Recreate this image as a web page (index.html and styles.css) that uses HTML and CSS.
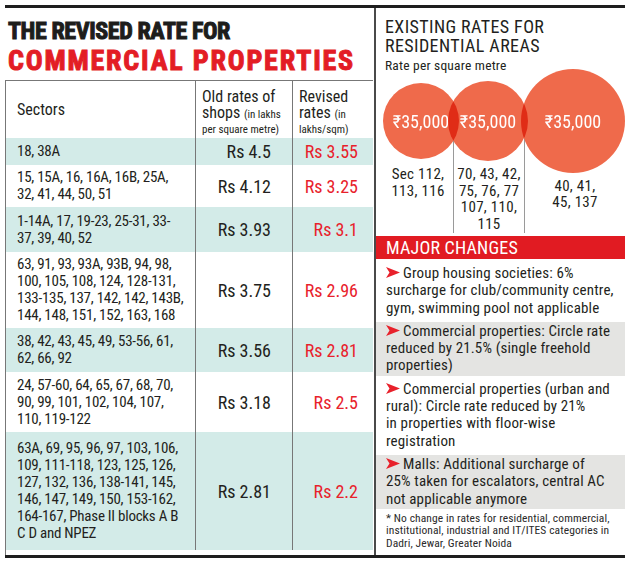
FILE: index.html
```html
<!DOCTYPE html>
<html>
<head>
<meta charset="utf-8">
<link rel="stylesheet" href="styles.css">
</head>
<body>
<div class="page">
  <div class="left">
    <h1 class="title">
      <span class="t1">THE REVISED RATE FOR</span>
      <span class="t2">COMMERCIAL PROPERTIES</span>
    </h1>
    <div class="table-wrap">
      <div class="table">
        <div class="cell c1 head">Sectors</div>
        <div class="cell c2 head hdr">
          <span class="hl">Old rates of</span>
          <span class="hl">shops <small>(in lakhs</small></span>
          <span class="hs">per square metre)</span>
        </div>
        <div class="cell c3 head hdr">
          <span class="hl">Revised</span>
          <span class="hl">rates <small>(in</small></span>
          <span class="hs">lakhs/sqm)</span>
        </div>

        <div class="cell c1 teal">18, 38A</div>
        <div class="cell c2 teal val">Rs 4.5</div>
        <div class="cell c3 teal val red">Rs 3.55</div>

        <div class="cell c1">15, 15A, 16, 16A, 16B, 25A,<br>32, 41, 44, 50, 51</div>
        <div class="cell c2 val">Rs 4.12</div>
        <div class="cell c3 val red">Rs 3.25</div>

        <div class="cell c1 teal">1-14A, 17, 19-23, 25-31, 33-<br>37, 39, 40, 52</div>
        <div class="cell c2 teal val">Rs 3.93</div>
        <div class="cell c3 teal val red">Rs 3.1</div>

        <div class="cell c1">63, 91, 93, 93A, 93B, 94, 98,<br>100, 105, 108, 124, 128-131,<br>133-135, 137, 142, 142, 143B,<br>144, 148, 151, 152, 163, 168</div>
        <div class="cell c2 val">Rs 3.75</div>
        <div class="cell c3 val red">Rs 2.96</div>

        <div class="cell c1 teal">38, 42, 43, 45, 49, 53-56, 61,<br>62, 66, 92</div>
        <div class="cell c2 teal val">Rs 3.56</div>
        <div class="cell c3 teal val red">Rs 2.81</div>

        <div class="cell c1">24, 57-60, 64, 65, 67, 68, 70,<br>90, 99, 101, 102, 104, 107,<br>110, 119-122</div>
        <div class="cell c2 val">Rs 3.18</div>
        <div class="cell c3 val red">Rs 2.5</div>

        <div class="cell c1 teal">63A, 69, 95, 96, 97, 103, 106,<br>109, 111-118, 123, 125, 126,<br>127, 132, 136, 138-141, 145,<br>146, 147, 149, 150, 153-162,<br>164-167, Phase II blocks A B<br>C D and NPEZ</div>
        <div class="cell c2 teal val">Rs 2.81</div>
        <div class="cell c3 teal val red">Rs 2.2</div>
      </div>
    </div>
  </div>

  <div class="right">
    <h2 class="rhead">EXISTING RATES FOR<br>RESIDENTIAL AREAS</h2>
    <div class="sub">Rate per square metre</div>
    <div class="circles">
      <div class="circle ca">₹35,000</div>
      <div class="circle cb">₹35,000</div>
      <div class="circle cc">₹35,000</div>
    </div>
    <div class="labels">
      <div class="lab la">Sec 112,<br>113, 116</div>
      <div class="lab lb">70, 43, 42,<br>75, 76, 77<br>107, 110,<br>115</div>
      <div class="lab lc">40, 41,<br>45, 137</div>
    </div>
    <div class="bar">MAJOR CHANGES</div>
    <ul class="changes">
      <li class="item"><svg class="arrow" viewBox="0 0 14 11" width="14" height="11"><polygon points="0,0 14,5.5 0,11 3.5,5.5"/></svg>Group housing societies: 6%<br>surcharge for club/community centre,<br>gym, swimming pool not applicable</li>
      <li class="item grey"><svg class="arrow" viewBox="0 0 14 11" width="14" height="11"><polygon points="0,0 14,5.5 0,11 3.5,5.5"/></svg>Commercial properties: Circle rate<br>reduced by 21.5% (single freehold<br>properties)</li>
      <li class="item"><svg class="arrow" viewBox="0 0 14 11" width="14" height="11"><polygon points="0,0 14,5.5 0,11 3.5,5.5"/></svg>Commercial properties (urban and<br>rural): Circle rate reduced by 21%<br>in properties with floor-wise<br>registration</li>
      <li class="item grey"><svg class="arrow" viewBox="0 0 14 11" width="14" height="11"><polygon points="0,0 14,5.5 0,11 3.5,5.5"/></svg>Malls: Additional surcharge of<br>25% taken for escalators, central AC<br>not applicable anymore</li>
    </ul>
    <p class="note">* No change in rates for residential, commercial,<br>institutional, industrial and IT/ITES categories in<br>Dadri, Jewar, Greater Noida</p>
  </div>
</div>
</body>
</html>
```
FILE: styles.css
```css
* { box-sizing: border-box; }
html, body { margin: 0; padding: 0; background: #fff; }
body {
  font-family: "Liberation Sans Narrow", "Roboto Condensed", "DejaVu Sans Condensed", sans-serif;
  color: #231f20;
}
.page {
  width: 620px;
  height: 553px;
  margin: 5px 0 0 5px;
  border-top: 3px solid #1e1e1e;
  border-bottom: 3px solid #1e1e1e;
  display: flex;
}
.left {
  width: 371px;
  display: flex;
  flex-direction: column;
}
.title {
  margin: 10px 0 0 3px;
  font-weight: 700;
}
.t1 {
  display: block;
  font-size: 24px;
  line-height: 26px;
  letter-spacing: -0.4px;
  color: #1d1d1b;
  -webkit-text-stroke: 1px #1d1d1b;
}
.t2 {
  display: block;
  margin-top: 2px;
  font-size: 28px;
  line-height: 30px;
  letter-spacing: 1.8px;
  color: #e31d25;
  -webkit-text-stroke: 1px #e31d25;
}
.table-wrap {
  flex: 1;
  margin-top: 4px;
  width: 368px;
  border-left: 1px solid #777;
  border-top: 1px solid #777;
}
.table {
  display: grid;
  grid-template-columns: 189px 97px 81px;
  grid-template-rows: 57px 27px 42px 45px 76px 44px 60px 118px;
}
.cell {
  display: flex;
  align-items: center;
  font-size: 15px;
  line-height: 17px;
}
.c1 { padding-left: 11px; letter-spacing: -0.25px; }
.c2, .c3 { border-left: 1px solid #777; }
.teal { background: #d3ebe8; }
.head.c1 { font-size: 16px; letter-spacing: 0; }
.hdr {
  flex-direction: column;
  align-items: flex-start;
  justify-content: flex-start;
  padding: 8px 0 0 6px;
}
.hl { display: block; font-size: 16px; line-height: 16px; }
.hl small { font-size: 11px; }
.hs { display: block; font-size: 11px; line-height: 13px; }
.val {
  justify-content: flex-end;
  font-size: 18px;
}
.c2.val { padding-right: 21px; }
.c3.val { padding-right: 15px; }
.red { color: #e8212b; }

.right {
  flex: 1;
  border-left: 2px solid #4a4a4a;
  padding: 0 0 0 9px;
  display: flex;
  flex-direction: column;
}
.rhead {
  margin: 10px 0 0 0;
  font-size: 18px;
  line-height: 18.5px;
  font-weight: 400;
  letter-spacing: 0.4px;
}
.sub {
  margin-top: 2px;
  font-size: 13.5px;
  line-height: 16px;
  letter-spacing: 0.2px;
}
.circles {
  display: flex;
  align-items: center;
  margin: -4px 0 0 -2px;
  height: 104px;
  isolation: isolate;
  position: relative;
  z-index: 1;
}
.circle {
  flex: none;
  border-radius: 50%;
  background: #ef6a4b;
  mix-blend-mode: multiply;
  color: #fff;
  display: flex;
  align-items: center;
  justify-content: center;
  font-size: 18px;
}
.ca { width: 76px; height: 76px; }
.cb { width: 80px; height: 80px; margin-left: -11px; }
.cc { width: 104px; height: 104px; margin-left: -7px; }
.labels {
  display: flex;
  margin: -40px 0 0 -2px;
  height: 100px;
  font-size: 15px;
  line-height: 16.5px;
  text-align: center;
  letter-spacing: 0.3px;
}
.lab { padding-top: 33px; }
.la { width: 70px; }
.lb { width: 72px; border-left: 1px solid #9a9a9a; border-right: 1px solid #9a9a9a; }
.lc { flex: 1; display: flex; align-items: center; justify-content: center; padding-top: 22px; }
.bar {
  margin: 3px 0 0 -9px;
  height: 23px;
  background: #e11b22;
  color: #fff;
  font-size: 18px;
  line-height: 23px;
  padding-left: 10px;
  letter-spacing: 0.2px;
}
.changes {
  list-style: none;
  margin: 5px 0 0 -9px;
  padding: 0;
  display: flex;
  flex-direction: column;
  gap: 4px;
}
.item {
  padding: 1px 0 1px 10px;
  font-size: 15px;
  line-height: 17.3px;
  letter-spacing: 0.15px;
  white-space: nowrap;
}
.grey { background: #e4e4e2; }
.arrow {
  fill: #e8212b;
  margin-right: 3px;
}
.note {
  margin: 3px 0 0 1px;
  font-size: 11.5px;
  line-height: 12.5px;
  letter-spacing: 0.1px;
  color: #2a2a2a;
  white-space: nowrap;
}
```
